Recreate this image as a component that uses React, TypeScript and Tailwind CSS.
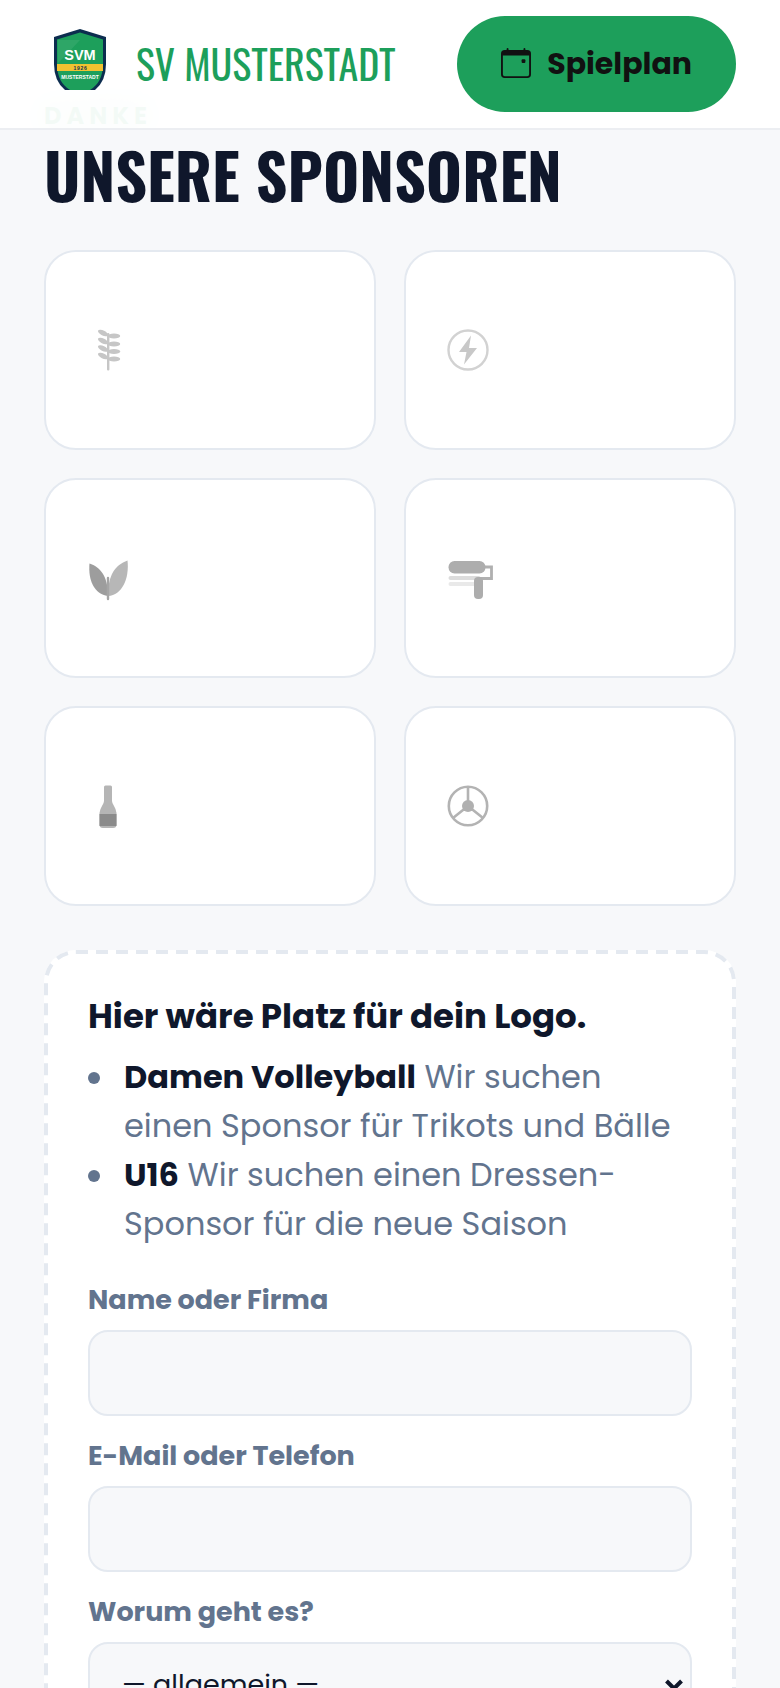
import React from 'react';
import { BsCalendarEvent } from 'react-icons/bs';

interface SponsorIconProps {
  children: React.ReactNode;
}

const SponsorIcon: React.FC<SponsorIconProps> = ({ children }) => (
  <svg className="w-11 h-11 overflow-visible" viewBox="0 0 44 44" fill="none" aria-hidden="true">
    {children}
  </svg>
);

const sponsors = [
  {
    name: 'Bäckerei',
    icon: (
      <SponsorIcon>
        <g fill="#c6c6c6">
          <rect x="21" y="5" width="2.400" height="37.500" rx="1" />
          {[0, 8, 15.5, 23].map((y) => (
            <g key={y}>
              <ellipse cx="17" cy={5 + y} rx="5.500" ry="2.500" transform={`rotate(27 17 ${5 + y})`} />
              <ellipse cx="28" cy={8 + y} rx="6.200" ry="2.600" />
            </g>
          ))}
        </g>
      </SponsorIcon>
    ),
  },
  {
    name: 'Elektro',
    icon: (
      <SponsorIcon>
        <circle cx="22" cy="22" r="19.5" stroke="#d2d2d2" strokeWidth="2.4" />
        <path d="M25 7.500 13 24h7.500l-2.500 12.500L31 20h-8z" fill="#c8c8c8" />
      </SponsorIcon>
    ),
  },
  {
    name: 'Gärtnerei',
    icon: (
      <SponsorIcon>
        <path d="M22 40C8 38 2 24 3.500 7.500 14 11 22 20 22 40z" fill="#9d9d9d" />
        <path d="M22 40C36 39 43.500 23 41.500 4.500 29 9 22 19 22 40z" fill="#b7b7b7" />
        <path d="M22 22v21" stroke="#a5a5a5" strokeWidth="2.400" strokeLinecap="round" />
      </SponsorIcon>
    ),
  },
  {
    name: 'Malerei',
    icon: (
      <SponsorIcon>
        <rect x="2.500" y="20" width="32" height="4" rx="2" fill="#dcdcdc" />
        <rect x="2.500" y="26" width="30" height="4" rx="2" fill="#e9e9e9" />
        <path d="M38 11h7.500v11.500H33V26" stroke="#b0b0b0" strokeWidth="2.800" />
        <rect x="2.500" y="5" width="37" height="12.500" rx="6" fill="#adadad" />
        <rect x="28" y="21" width="9" height="22" rx="4" fill="#adadad" />
      </SponsorIcon>
    ),
  },
  {
    name: 'Getränke',
    icon: (
      <SponsorIcon>
        <path
          d="M19.500 1.500h5q1.500 0 1.500 1.500V17q0 2 2 5t2.500 7v11.500q0 3.500-3.500 3.500H17q-3.500 0-3.500-3.500V29q.5-4 2.500-7t2-5V3Q18 1.500 19.500 1.500z"
          fill="#b5b5b5"
        />
        <rect x="13.500" y="30" width="17" height="12" fill="#8b8b8b" />
      </SponsorIcon>
    ),
  },
  {
    name: 'Autohaus',
    icon: (
      <SponsorIcon>
        <g stroke="#b3b3b3" strokeWidth="2.600">
          <circle cx="22" cy="22" r="19.200" />
          <path d="M22 3v19M22 22 7 34M22 22l15 12" />
        </g>
        <circle cx="22" cy="22" r="6" fill="#b0b0b0" />
      </SponsorIcon>
    ),
  },
];

const Logo: React.FC = () => (
  <svg className="w-18 h-18 shrink-0" viewBox="0 0 72 72" aria-hidden="true">
    <path d="M36 1 62 9V36q0 17-11 26H21Q10 53 10 36V9z" fill="#0c2d4f" />
    <path d="M36 4.500 59 11.500V36q0 18-13 26H26Q13 54 13 36V11.500z" fill="#1d9f5b" />
    <path d="M14 12h22L22 27l-8 8z" fill="#fff" opacity=".08" />
    <rect x="13" y="36" width="46" height="7" fill="#f2c230" />
    <g fontFamily="'Liberation Sans', sans-serif" fontWeight="700" textAnchor="middle">
      <text x="36" y="31.500" fontSize="14.500" fill="#fff">SVM</text>
      <text x="36.500" y="41.500" fontSize="5" letterSpacing="0.700" fill="#0c2d4f">1926</text>
      <text x="36" y="51" fontSize="5" fill="#fff">MUSTERSTADT</text>
    </g>
  </svg>
);

const fieldClass =
  'block w-full h-[86px] rounded-[20px] border-2 border-[#e4e9f0] bg-[#f7f8fa] px-8 text-[27px] text-slate-900';
const labelClass = 'block mb-[10px] text-[27px] leading-10 font-bold text-slate-500';
const bulletClass =
  'relative before:absolute before:-left-9 before:top-5 before:size-3 before:rounded-full before:bg-slate-500';

const App: React.FC = () => {
  return (
    <div className="min-h-screen bg-[#f7f8fa] font-['Poppins','Inter',sans-serif] text-slate-900">
      <header className="sticky top-0 z-10 flex items-center justify-between px-11 py-4 bg-white/95 border-b-2 border-[#eceef2]">
        <a href="#start" className="flex items-center gap-5">
          <Logo />
          <span className="pb-0.5 font-['Oswald','Liberation_Sans_Narrow',sans-serif] text-[40px] leading-none whitespace-nowrap text-[#1d9f5b]">
            SV MUSTERSTADT
          </span>
        </a>
        <a
          href="#spielplan"
          className="flex items-center justify-center gap-4 h-24 px-11 pb-0.5 rounded-full bg-[#1d9f5b] text-[30px] font-bold text-[#111]"
        >
          <BsCalendarEvent className="w-[30px] h-[30px]" />
          Spielplan
        </a>
      </header>

      {/* content starts slightly under the translucent header */}
      <main className="-mt-8 px-11 pb-16">
        <p className="h-8 text-[24px] leading-9 font-bold tracking-[5px] text-[#1d9f5b] [text-shadow:0_0_28px_#1d9f5b] [clip-path:inset(-40px_0_0_-40px)]">
          DANKE
        </p>
        <h2 className="mt-1.5 mb-[38px] font-['Oswald','Liberation_Sans_Narrow',sans-serif] text-[62px] leading-[76px] font-bold whitespace-nowrap">
          UNSERE SPONSOREN
        </h2>

        <ul className="grid grid-cols-2 gap-7">
          {sponsors.map((s) => (
            <li key={s.name}>
              <a
                href="#sponsoren"
                aria-label={s.name}
                className="flex items-center h-[200px] px-10 rounded-[32px] border-2 border-[#e4e9f0] bg-white"
              >
                {s.icon}
              </a>
            </li>
          ))}
        </ul>

        <section className="relative mt-11 p-11 rounded-[32px] bg-white">
          {/* long-dash outline */}
          <svg className="absolute inset-0 w-full h-full pointer-events-none" fill="none" aria-hidden="true">
            <rect
              x="2"
              y="2"
              rx="30"
              className="w-[calc(100%-4px)] h-[calc(100%-4px)]"
              stroke="#e4e9f0"
              strokeWidth="4"
              strokeDasharray="12 8"
            />
          </svg>
          <h3 className="text-[34px] leading-[44px] font-bold">Hier wäre Platz für dein Logo.</h3>
          <ul className="mt-[14px] pl-9 text-[32px] leading-[49px] text-slate-500">
            <li className={bulletClass}>
              <strong className="text-slate-900">Damen Volleyball</strong> Wir suchen einen Sponsor für Trikots und Bälle
            </li>
            <li className={bulletClass}>
              <strong className="text-slate-900">U16</strong> Wir suchen einen Dressen-Sponsor für die neue Saison
            </li>
          </ul>

          <form className="mt-8 flex flex-col gap-5">
            <div>
              <label htmlFor="name" className={labelClass}>Name oder Firma</label>
              <input id="name" type="text" className={fieldClass} />
            </div>
            <div>
              <label htmlFor="kontakt" className={labelClass}>E-Mail oder Telefon</label>
              <input id="kontakt" type="text" className={fieldClass} />
            </div>
            <div>
              <label htmlFor="thema" className={labelClass}>Worum geht es?</label>
              <div className="relative">
                <select id="thema" className={`${fieldClass} appearance-none`}>
                  <option>— allgemein —</option>
                  <option>Damen Volleyball</option>
                  <option>U16</option>
                </select>
                <svg
                  className="absolute right-2 inset-y-0 my-auto w-5 h-3 pointer-events-none"
                  viewBox="0 0 20 12"
                  fill="none"
                  stroke="#0f172a"
                  strokeWidth="4"
                  aria-hidden="true"
                >
                  <path d="m2.500 2 7.500 7.500L17.500 2" />
                </svg>
              </div>
            </div>
          </form>
        </section>
      </main>
    </div>
  );
};

export default App;
